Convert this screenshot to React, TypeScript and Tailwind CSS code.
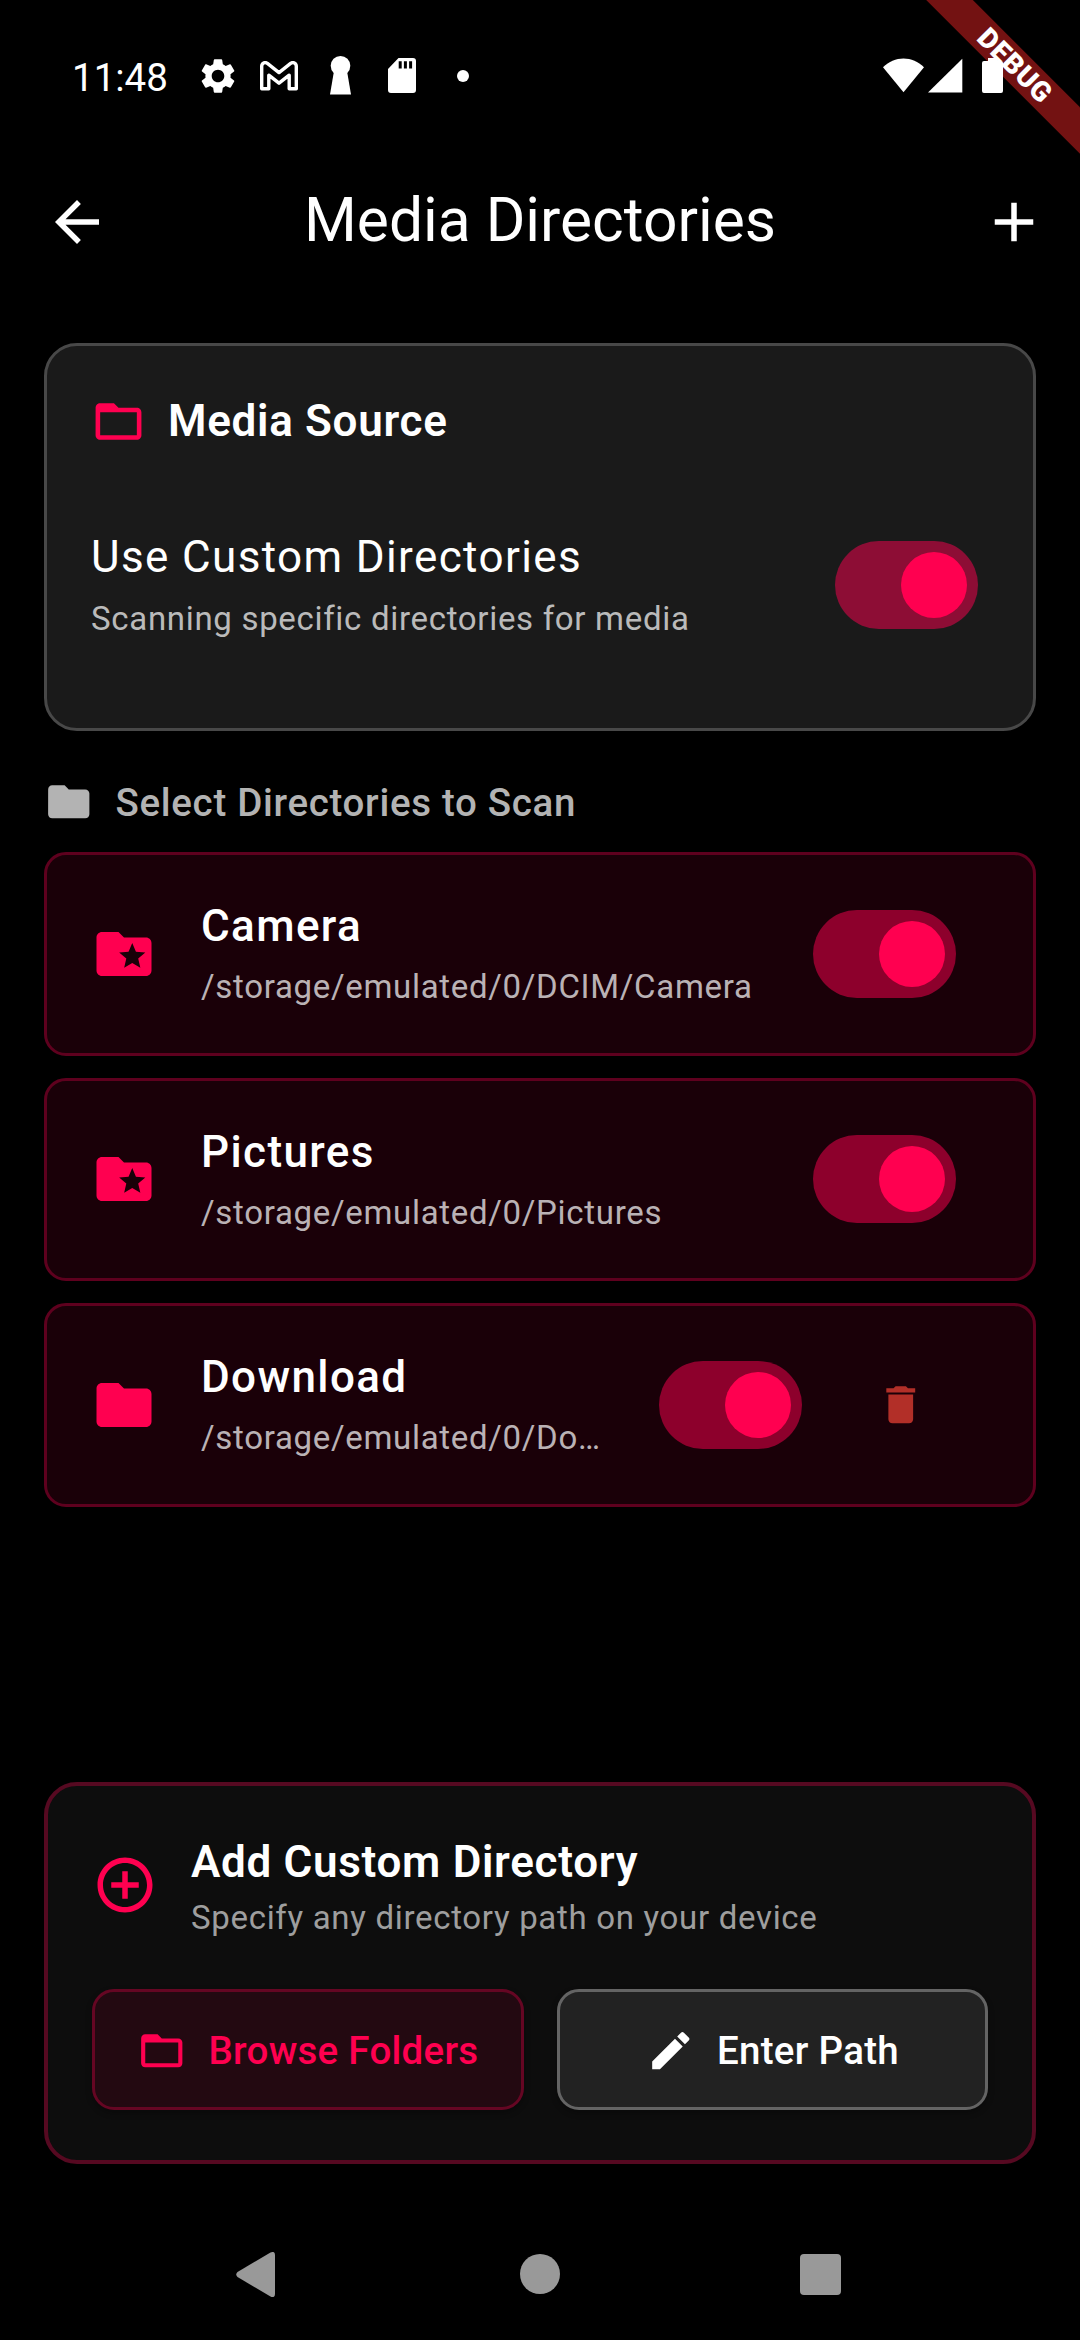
import { useState } from 'react';
import clsx from 'clsx';
import {
  MdAdd,
  MdAddCircleOutline,
  MdArrowBack,
  MdDelete,
  MdEdit,
  MdFolder,
  MdFolderOpen,
  MdFolderSpecial,
  MdSettings,
} from 'react-icons/md';

type Directory = {
  name: string;
  path: string;
  custom?: boolean;
};

const directories: Directory[] = [
  { name: 'Camera', path: '/storage/emulated/0/DCIM/Camera' },
  { name: 'Pictures', path: '/storage/emulated/0/Pictures' },
  { name: 'Download', path: '/storage/emulated/0/Download', custom: true },
];

function Switch({ label, className }: { label: string; className?: string }) {
  const [on, setOn] = useState(true);

  return (
    <button
      type="button"
      role="switch"
      aria-checked={on}
      aria-label={label}
      onClick={() => setOn(!on)}
      className={clsx(
        'flex h-[88px] w-[143px] shrink-0 items-center rounded-full bg-[#ff0050]/50 px-[11px]',
        on ? 'justify-end' : 'justify-start',
        className,
      )}>
      <span className="size-[66px] rounded-full bg-[#ff0050]" />
    </button>
  );
}

function GmailIcon() {
  return (
    <svg viewBox="0 0 38 30" className="h-[30px] w-[38px]" fill="none" stroke="currentColor" strokeWidth="3.4">
      <path
        strokeLinejoin="round"
        d="M1.7 27.7V5.2C1.7 2 5 .6 7.4 2.4L19 11.6 30.6 2.4C33 .6 36.3 2 36.3 5.2V27.7H29.2V14.2L19 22.2 8.8 14.2V27.7Z"
      />
    </svg>
  );
}

function KeyholeIcon() {
  return (
    <svg viewBox="0 0 21 39" className="h-[39px] w-[21px]" fill="currentColor">
      <circle cx="10.5" cy="9.8" r="9.8" />
      <path d="M4 15h13l4 23.5H0z" />
    </svg>
  );
}

function SdCardIcon() {
  return (
    <svg viewBox="0 0 28 35" className="h-[35px] w-[28px]" fill="currentColor" fillRule="evenodd">
      <path d="M10.5 0H25q3 0 3 3v29q0 3-3 3H3q-3 0-3-3V11zM10.7 3.3v7.2h3V3.3zm5.2 0v7.2h3V3.3zm5.2 0v7.2h3V3.3z" />
    </svg>
  );
}

function StatusBar() {
  return (
    <div className="flex h-[145px] items-start pt-[55px] pr-[77px] pl-[72px] text-white">
      <span className="w-[97px] text-[38.5px] leading-[45px]">11:48</span>
      <div className="ml-[28px] flex h-[41px] items-center">
        <MdSettings className="size-[42px]" />
        <span className="ml-[21px]">
          <GmailIcon />
        </span>
        <span className="ml-[32px]">
          <KeyholeIcon />
        </span>
        <span className="ml-[37px]">
          <SdCardIcon />
        </span>
        <span className="ml-[41px] size-[12px] rounded-full bg-white" />
      </div>
      <div className="relative z-10 ml-auto flex h-[41px] items-center">
        <svg viewBox="0 0 41 35" className="h-[35px] w-[41px]" fill="currentColor">
          <path d="M20.5 34.3 0 9.2C5.8 3.6 13 .4 20.5.4S35.2 3.6 41 9.2z" />
        </svg>
        <svg viewBox="0 0 35 35" className="ml-[4px] h-[35px] w-[35px]" fill="currentColor">
          <path d="M0 34.5 34.3.8V34.5z" />
        </svg>
        <svg viewBox="0 0 21 35" className="ml-[19px] h-[35px] w-[21px]" fill="currentColor">
          <path d="M6 0h9v3h4q2 0 2 2v28q0 2-2 2H2q-2 0-2-2V5q0-2 2-2h4z" />
        </svg>
      </div>
    </div>
  );
}

function DirectoryCard({ name, path, custom }: Directory) {
  const Icon = custom ? MdFolder : MdFolderSpecial;

  return (
    <li className="flex h-[203.5px] items-center rounded-[22px] border-[3px] border-[#5e001e] bg-[#1a0008] pr-[66px] pl-[44px]">
      <Icon className="size-[66px] shrink-0 text-[#ff0050]" />
      <div className="ml-[44px] min-w-0 flex-1 pt-[6.5px]">
        <p className="text-[44px] leading-[60px] font-medium tracking-[1.375px] text-white">{name}</p>
        <p className="truncate text-[33px] leading-[62px] tracking-[0.6875px] text-[#bab2b5]">{path}</p>
      </div>
      <Switch label={name} className={custom ? 'mr-[33px] ml-[55px]' : 'mr-[11px] ml-[55px]'} />
      {custom && (
        <button type="button" aria-label={`Remove ${name}`} className="flex size-[132px] items-center justify-center">
          <MdDelete className="size-[49.5px] text-[#b22f28]" />
        </button>
      )}
    </li>
  );
}

export default function App() {
  return (
    <div className="relative flex h-[2340px] w-[1080px] flex-col overflow-hidden bg-black font-['Roboto',sans-serif]">
      <div className="absolute top-[49px] left-[815px] flex h-[33px] w-[400px] rotate-45 items-center justify-center bg-[#731212]">
        <span className="text-[28px] leading-[33px] font-black tracking-[0.6px] text-white">DEBUG</span>
      </div>

      <StatusBar />

      <header className="flex h-[154px] items-center pr-[33px] pl-[44px]">
        <button type="button" aria-label="Back">
          <MdArrowBack className="size-[66px] text-white" />
        </button>
        <h1 className="flex-1 pr-[11px] pb-[3px] text-center text-[60.5px] leading-[72px] text-white">
          Media Directories
        </h1>
        <button type="button" aria-label="Add directory">
          <MdAdd className="size-[66px] text-white" />
        </button>
      </header>

      <main className="px-[44px] pt-[44px]">
        <section className="h-[388px] rounded-[33px] border-[3px] border-[#484848] bg-[#1a1a1a] px-[44px] pt-[48px]">
          <div className="flex h-[55px] items-center gap-[22px]">
            <MdFolderOpen className="size-[55px] text-[#ff0050]" />
            <h2 className="text-[44px] leading-[55px] font-semibold tracking-[0.6875px] text-white">Media Source</h2>
          </div>
          <div className="mt-[78px] flex items-start justify-between">
            <div>
              <p className="text-[44px] leading-[61px] tracking-[1.375px] text-white">Use Custom Directories</p>
              <p className="text-[33px] leading-[61px] tracking-[0.6875px] text-[#bababa]">
                Scanning specific directories for media
              </p>
            </div>
            <Switch label="Use Custom Directories" className="mt-[14px] mr-[11px]" />
          </div>
        </section>

        <div className="flex h-[121px] items-start gap-[22px] pt-[46px]">
          <MdFolder className="size-[49.5px] text-[#b3b3b3]" />
          <h2 className="text-[38.5px] leading-[52px] font-medium tracking-[0.6875px] text-[#b3b3b3]">
            Select Directories to Scan
          </h2>
        </div>

        <ul className="flex flex-col gap-[22px]">
          {directories.map((directory) => (
            <DirectoryCard key={directory.name} {...directory} />
          ))}
        </ul>
      </main>

      <section className="mx-[44px] mt-auto h-[382px] shrink-0 rounded-[33px] border-4 border-[#560921] bg-[#0d0d0d] px-[44px] pt-[44px]">
        <div className="flex h-[159px] items-start gap-[33px]">
          <MdAddCircleOutline className="mt-[22px] size-[66px] text-[#ff0050]" />
          <div className="pt-[4px]">
            <h2 className="text-[44px] leading-[56px] font-semibold tracking-[0.6875px] text-white">
              Add Custom Directory
            </h2>
            <p className="text-[33px] leading-[56px] tracking-[0.6875px] text-[#9e9e9e]">
              Specify any directory path on your device
            </p>
          </div>
        </div>
        <div className="grid grid-cols-2 gap-[33px]">
          <button
            type="button"
            className="flex h-[121px] items-center justify-center gap-[22px] rounded-[22px] border-[3px] border-[#650623] bg-[#230911] pt-[2px] text-[#ff0050] shadow-[0_3px_6px_rgba(0,0,0,0.3)]">
            <MdFolderOpen className="size-[49.5px]" />
            <span className="text-[38.5px] leading-[50px] font-medium tracking-[0.275px]">Browse Folders</span>
          </button>
          <button
            type="button"
            className="flex h-[121px] items-center justify-center gap-[22px] rounded-[22px] border-[3px] border-[#646464] bg-[#222222] pt-[2px] text-white shadow-[0_3px_6px_rgba(0,0,0,0.3)]">
            <MdEdit className="size-[49.5px]" />
            <span className="text-[38.5px] leading-[50px] font-medium tracking-[0.275px]">Enter Path</span>
          </button>
        </div>
      </section>

      <nav className="mt-[44px] flex h-[132px] shrink-0 items-center justify-between pr-[239px] pl-[236px] text-[#999999]">
        <svg viewBox="0 0 39 45" className="h-[45px] w-[39px]" fill="currentColor">
          <path d="M34.5.6Q39-1.5 39 3V42Q39 46.5 34.5 44.4L1.5 25Q-1 22.5 1.5 20z" />
        </svg>
        <span className="ml-[5px] size-[40px] rounded-full bg-[#999999]" />
        <span className="size-[41px] rounded-[4px] bg-[#999999]" />
      </nav>
    </div>
  );
}
